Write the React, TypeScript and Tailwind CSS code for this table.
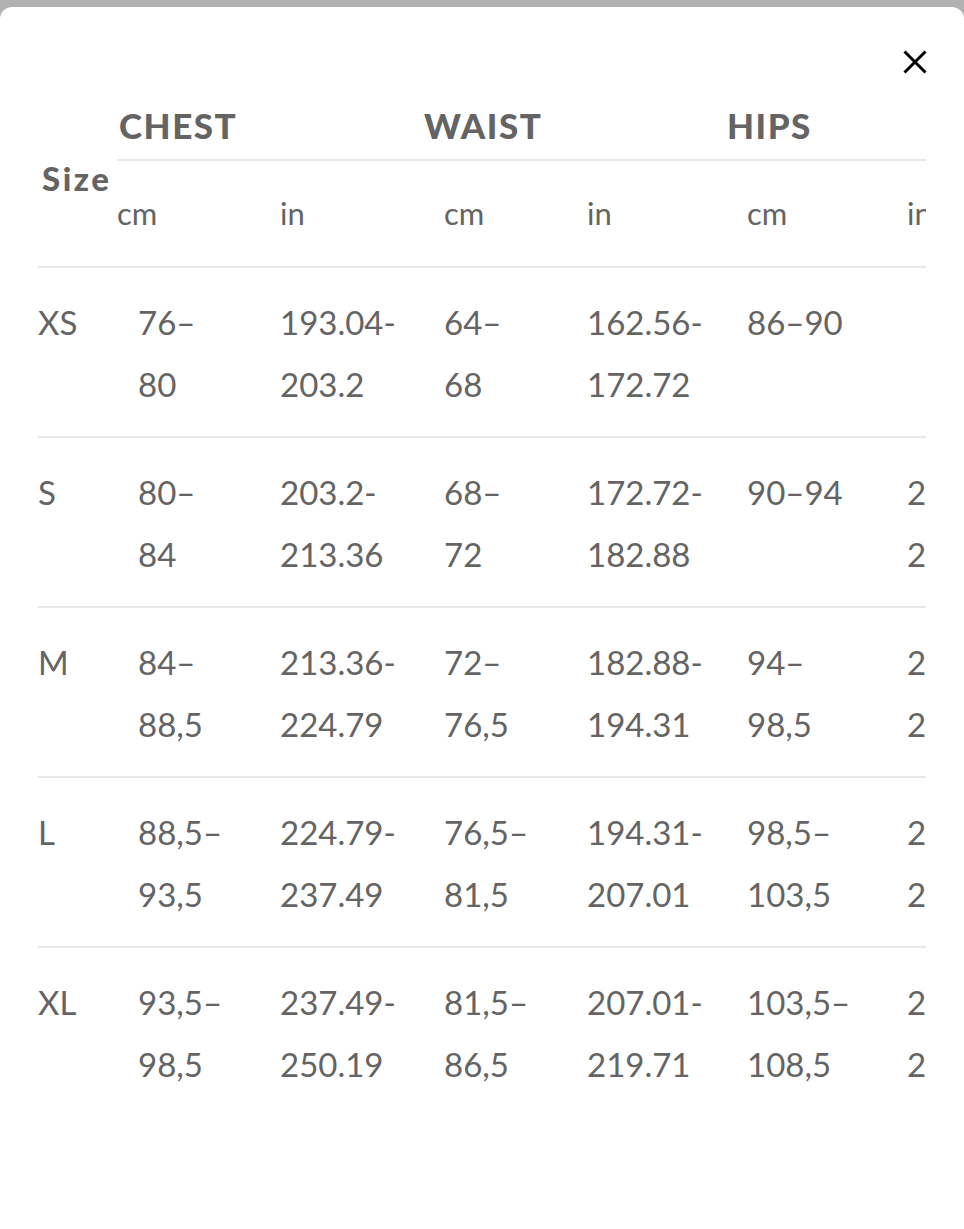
type Row = { size: string; cells: string[][] };

const rows: Row[] = [
  { size: "XS", cells: [["76–", "80"], ["193.04-", "203.2"], ["64–", "68"], ["162.56-", "172.72"], ["86–90"], []] },
  { size: "S", cells: [["80–", "84"], ["203.2-", "213.36"], ["68–", "72"], ["172.72-", "182.88"], ["90–94"], ["218.44-", "228.6"]] },
  { size: "M", cells: [["84–", "88,5"], ["213.36-", "224.79"], ["72–", "76,5"], ["182.88-", "194.31"], ["94–", "98,5"], ["228.6-", "238.76"]] },
  { size: "L", cells: [["88,5–", "93,5"], ["224.79-", "237.49"], ["76,5–", "81,5"], ["194.31-", "207.01"], ["98,5–", "103,5"], ["238.76-", "250.19"]] },
  { size: "XL", cells: [["93,5–", "98,5"], ["237.49-", "250.19"], ["81,5–", "86,5"], ["207.01-", "219.71"], ["103,5–", "108,5"], ["250.19-", "262.89"]] },
];

// widths of data columns (cm/in pairs), size col is separate
const dataCols = ["w-[142px]", "w-[164px]", "w-[143px]", "w-[160px]", "w-[160px]", "w-[160px]"];
const subCols = ["w-[163px]", "w-[164px]", "w-[143px]", "w-[160px]", "w-[160px]", "w-[160px]"];
const units = ["cm", "in", "cm", "in", "cm", "in"];

function App() {
  return (
    <div
      className="min-h-[1229px] bg-[#b1b1b1] pt-[7px]"
      style={{ fontFamily: "Lato, 'Open Sans', sans-serif" }}
    >
      <div className="relative min-h-[1222px] bg-white rounded-t-[12px] pt-[84px] pl-[38px]">
        <button className="absolute top-[43px] left-[903px] text-black">
          <svg width="24" height="24" viewBox="0 0 24 24" fill="none" stroke="currentColor" strokeWidth="3">
            <path d="M1.5 1.5 L22.5 22.5 M22.5 1.5 L1.5 22.5" />
          </svg>
        </button>

        <div className="w-[888px] overflow-hidden text-[#646464]">
          {/* head */}
          <div className="flex border-b-2 border-[#e8e8e8] w-max">
            <div className="w-[79px] shrink-0 flex items-center pl-[4px]">
              <span className="text-[33px] font-black leading-none tracking-[2.5px]">Size</span>
            </div>
            <div className="flex flex-col">
              <div className="flex h-[70px] items-center border-b-2 border-[#e8e8e8] text-[35px] font-black leading-none tracking-[1.5px]">
                <span className="w-[307px] pl-[2px] shrink-0">CHEST</span>
                <span className="w-[303px] shrink-0">WAIST</span>
                <span className="w-[340px] shrink-0">HIPS</span>
              </div>
              <div className="flex h-[105px] items-center text-[31px] leading-none">
                {units.map((u, i) => (
                  <span key={i} className={`${subCols[i]} shrink-0`}>
                    {u}
                  </span>
                ))}
              </div>
            </div>
          </div>

          {/* body */}
          {rows.map((r, ri) => (
            <div
              key={r.size}
              className={`flex w-max pt-[23px] text-[33px] leading-[62px] ${
                ri < rows.length - 1 ? "pb-[21px] border-b-2 border-[#e8e8e8]" : "pb-[23px]"
              }`}
            >
              <div className="w-[100px] shrink-0">{r.size}</div>
              {r.cells.map((c, ci) => (
                <div key={ci} className={`${dataCols[ci]} shrink-0 h-[124px]`}>
                  {c.map((line, li) => (
                    <div key={li} className="whitespace-nowrap">
                      {line}
                    </div>
                  ))}
                </div>
              ))}
            </div>
          ))}
        </div>
      </div>
    </div>
  );
}

export default App;
